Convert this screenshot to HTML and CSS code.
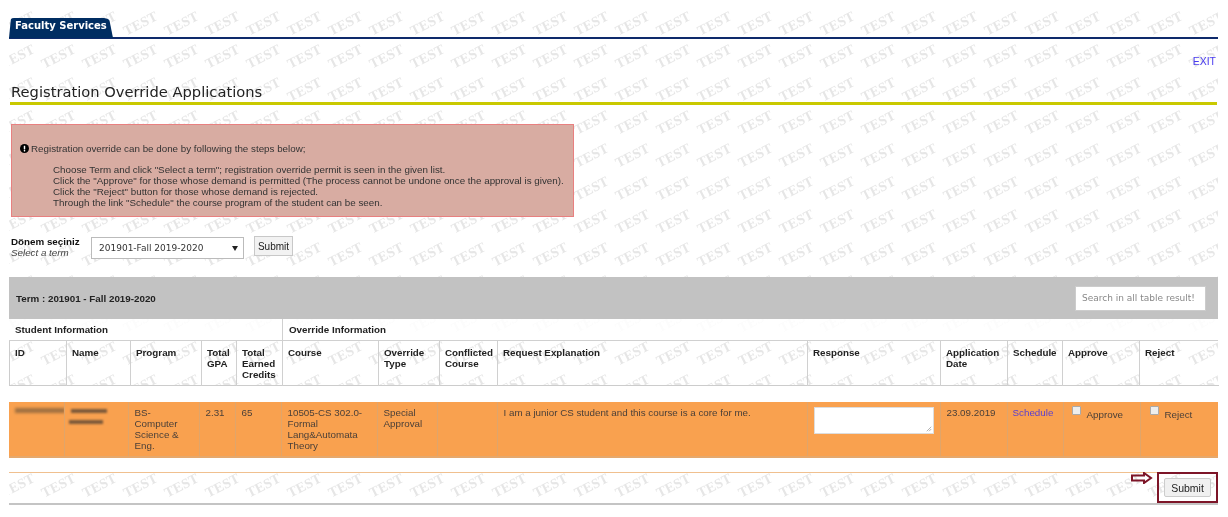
FILE: index.html
```html
<!DOCTYPE html>
<html lang="en">
<head>
<meta charset="utf-8">
<title>Registration Override Applications</title>
<link rel="stylesheet" href="styles.css">
</head>
<body>
<div class="page">
  <nav class="tabs"><a class="tab">Faculty Services</a></nav>
  <div class="exit-row"><a class="exit">EXIT</a></div>
  <h1 class="title">Registration Override Applications</h1>
  <section class="notice">
    <p class="notice-lead"><svg class="info" viewBox="0 0 16 16"><circle cx="8" cy="8" r="8" fill="#000"/><rect x="6.7" y="3" width="2.6" height="6.6" rx=".6" fill="#fff"/><rect x="6.7" y="10.6" width="2.6" height="2.6" rx=".6" fill="#fff"/></svg> Registration override can be done by following the steps below;</p>
    <div class="notice-steps">
      <div>Choose Term and click "Select a term"; registration override permit is seen in the given list.</div>
      <div>Click the "Approve" for those whose demand is permitted (The process cannot be undone once the approval is given).</div>
      <div>Click the "Reject" button for those whose demand is rejected.</div>
      <div>Through the link "Schedule" the course program of the student can be seen.</div>
    </div>
  </section>
  <form class="term-form">
    <label class="term-label"><b>Dönem seçiniz</b><i>Select a term</i></label>
    <div class="select"><span>201901-Fall 2019-2020</span><span class="caret"></span></div>
    <button type="button" class="btn-small">Submit</button>
  </form>
  <div class="term-bar">
    <b>Term : 201901 - Fall 2019-2020</b>
    <div class="search">Search in all table result!</div>
  </div>
  <div class="group-row">
    <div class="group group-student">Student Information</div>
    <div class="group">Override Information</div>
  </div>
  <table class="grid head">
    <tr>
      <th class="c1">ID</th><th class="c2">Name</th><th class="c3">Program</th><th class="c4">Total GPA</th><th class="c5">Total Earned Credits</th><th class="c6">Course</th><th class="c7">Override Type</th><th class="c8">Conflicted Course</th><th class="c9">Request Explanation</th><th class="c10">Response</th><th class="c11">Application Date</th><th class="c12">Schedule</th><th class="c13">Approve</th><th class="c14">Reject</th>
    </tr>
  </table>
  <div class="spacer"></div>
  <table class="grid body">
    <tr>
      <td class="d1"><span class="blur-id"></span></td>
      <td class="d2"><span class="blur-bar"></span><span class="blur-bar short"></span></td>
      <td class="d3">BS-Computer Science &amp; Eng.</td>
      <td class="d4">2.31</td>
      <td class="d5">65</td>
      <td class="d6">10505-CS 302.0-Formal Lang&amp;Automata Theory</td>
      <td class="d7">Special Approval</td>
      <td class="d8"></td>
      <td class="d9">I am a junior CS student and this course is a core for me.</td>
      <td class="d10"><div class="response"><svg class="grip" viewBox="0 0 8 8"><path d="M7 1 1 7M7 4 4 7" stroke="#999" fill="none"/></svg></div></td>
      <td class="d11">23.09.2019</td>
      <td class="d12"><a class="schedule">Schedule</a></td>
      <td class="d13"><span class="check"><span class="box"></span>Approve</span></td>
      <td class="d14"><span class="check"><span class="box"></span>Reject</span></td>
    </tr>
  </table>
  <div class="spacer small"></div>
  <div class="footer-row">
    <svg class="arrow" viewBox="0 0 22 12"><path d="M1 3.5h12V1l7 5-7 5V8.500H1z" fill="none" stroke="#7d1528" stroke-width="2"/></svg>
    <div class="submit-box"><button type="button" class="btn-submit">Submit</button></div>
  </div>
</div>
</body>
</html>
```
FILE: styles.css
```css
* { box-sizing: border-box; }
html, body { margin: 0; padding: 0; height: 517px; overflow: hidden; background: #fff; }
body {
  padding: 9px 0 0 9px;
  font-family: "Liberation Sans", Arial, sans-serif;
  font-size: 9.800px;
  color: #222;
}
.page {
  width: 1209px; height: 496px;
  padding-top: 9px;
  background-color: #fff;
  background-image: url("data:image/svg+xml,%3Csvg xmlns='http://www.w3.org/2000/svg' width='41' height='33'%3E%3Ctext x='20.5' y='21' text-anchor='middle' transform='rotate(-27 20.5 16.5)' font-family='Liberation Serif' font-weight='700' font-size='14' letter-spacing='.2' fill='%23e6e6e6'%3ETEST%3C/text%3E%3C/svg%3E");
  background-position: -12.500px -2.500px;
  filter: blur(.35px);
}
.tabs { height: 21px; border-bottom: 2px solid #0e2a6b; display: flex; }
.tab {
  width: 104px; height: 20px;
  background: #002d62;
  border-radius: 5px 9px 0 0;
  clip-path: polygon(2px 0, 100px 0, 104px 100%, 0 100%);
  color: #fff;
  font: 700 10px/15px "DejaVu Sans", sans-serif;
  padding-left: 6px;
  white-space: nowrap;
}
.exit-row { display: flex; justify-content: flex-end; height: 43px; padding-top: 15px; padding-right: 2px; }
.exit { color: #4a3cf0; font-size: 10.500px; line-height: 14px; }
.title {
  margin: 0 0 0 1px;
  padding: 1px 0 0 1px;
  width: 1207px;
  height: 23px;
  border-bottom: 3px solid #c9c900;
  font: 400 14.700px/18px "DejaVu Sans", sans-serif;
  color: #222;
}
.notice {
  margin: 19px 0 0 2px;
  width: 563px; height: 93px;
  background: #d8aca2;
  border: 1px solid #e88080;
  padding: 18px 8px 0 8px;
  line-height: 11px;
  color: #333;
}
.notice-lead { margin: 0 0 10px; display: flex; align-items: center; gap: 2px; height: 11px; }
.info { width: 9px; height: 9px; flex: none; }
.notice-steps { margin-left: 33px; white-space: nowrap; }
.term-form { display: flex; align-items: flex-start; margin: 19px 0 0 2px; height: 41px; }
.term-label { display: flex; flex-direction: column; width: 80px; line-height: 11px; color: #222; }
.term-label b { color: #111; }
.term-label i { color: #444; }
.select {
  width: 153px; height: 22px;
  margin-top: 1px;
  background: #fff;
  border: 1px solid #bbb;
  display: flex; align-items: center; justify-content: space-between;
  padding: 0 5px 0 7px;
  font: 9px "DejaVu Sans", sans-serif;
  color: #333;
}
.caret { width: 0; height: 0; border: 3.500px solid transparent; border-top: 5px solid #222; border-bottom: 0; }
.btn-small {
  margin: 0 0 0 10px;
  width: 39px; height: 20px; padding: 0;
  background: #f2f2f2;
  border: 1px solid #c8c8c8;
  font: 10px "Liberation Sans", sans-serif;
  color: #222;
}
.term-bar {
  height: 42px;
  background: #c2c2c2;
  display: flex; align-items: center; justify-content: space-between;
  padding: 0 12px 0 7px;
  color: #222;
}
.search {
  width: 131px; height: 25px;
  background: #fff;
  border: 1px solid #ccc;
  padding: 0 6px;
  line-height: 23px;
  color: #888;
  font-family: "DejaVu Sans", sans-serif;
  font-size: 9px;
  white-space: nowrap;
}
.group-row { display: flex; height: 22px; background: rgba(255,255,255,.85); border-bottom: 1px solid #d0d0d0; font-weight: 700; line-height: 22px; color: #222; }
.group { padding-left: 6px; }
.group-student { width: 274px; border-right: 1px solid #d0d0d0; }
.grid { border-collapse: collapse; table-layout: fixed; width: 1209px; }
.grid th, .grid td { vertical-align: top; overflow: hidden; padding: 0; }
.head { height: 45px; border-bottom: 1px solid #ccc; border-left: 1px solid #ccc; }
.head th { text-align: left; line-height: 11px; padding: 6px 4px 0 5px; border-right: 1px solid #d0d0d0; color: #222; }
.head th:last-child { border-right: 0; }
.c1 { width: 57px; } .c2 { width: 64px; } .c3 { width: 71px; } .c4 { width: 35px; } .c5 { width: 46px; }
.c6 { width: 96px; } .c7 { width: 61px; } .c8 { width: 58px; } .c9 { width: 310px; } .c10 { width: 133px; }
.c11 { width: 67px; } .c12 { width: 55px; } .c13 { width: 77px; } .c14 { width: 79px; }
.spacer { height: 16px; background: #fff; }
.spacer.small { height: 14px; }
.body { height: 56px; background: #f9a14f; }
.body td { border-right: 1px solid #e0a56a; border-bottom: 2px solid #e6a86c; line-height: 11px; color: #4c4038; padding: 5px 6px 0 6px; }
.body td:last-child { border-right: 0; }
.d1 { width: 55px; } .d2 { width: 64px; } .d3 { width: 71px; } .d4 { width: 36px; } .d5 { width: 46px; }
.d6 { width: 96px; } .d7 { width: 60px; } .d8 { width: 60px; } .d9 { width: 310px; } .d10 { width: 133px; }
.d11 { width: 67px; } .d12 { width: 56px; } .d13 { width: 77px; } .d14 { width: 78px; }
.blur-id { display: block; width: 50px; height: 5px; margin: 1px 0 0 0; background: #a07040; filter: blur(1.500px); }
.blur-bar { display: block; width: 36px; height: 4px; margin: 2px 0 7px 0; background: #7c5a3a; filter: blur(1.200px); }
.blur-bar.short { width: 34px; margin-left: -2px; }
.response { position: relative; width: 120px; height: 27px; background: #fff; border: 1px solid #ddd; }
.grip { position: absolute; right: 1px; bottom: 1px; width: 6px; height: 6px; }
.schedule { color: #5a3fd0; margin-left: -1px; }
.check { display: flex; align-items: flex-start; gap: 6px; padding-top: 2px; }
.box { width: 9px; height: 9px; background: #eee; border: 1px solid #aaa; border-radius: 1px; margin-top: -3px; flex: none; }
.d13 .check { padding-left: 2px; }
.d14 .check { padding-left: 3px; }
.footer-row {
  position: relative;
  height: 33px; width: 1209px;
  border-top: 1px solid #f0c08f;
  border-bottom: 2px solid #c4c4c4;
  display: flex; justify-content: flex-end;
}
.arrow { position: absolute; right: 65px; top: -1px; width: 22px; height: 12px; }
.submit-box {
  width: 61px; height: 31px;
  margin-top: -1px;
  border: 2px solid #7d1528;
  display: flex; align-items: center; justify-content: center;
}
.btn-submit { width: 47px; height: 19px; padding: 0; background: #f0f0f0; border: 1px solid #ccc; border-radius: 2px; font: 10.500px "Liberation Sans", sans-serif; color: #222; }
```
